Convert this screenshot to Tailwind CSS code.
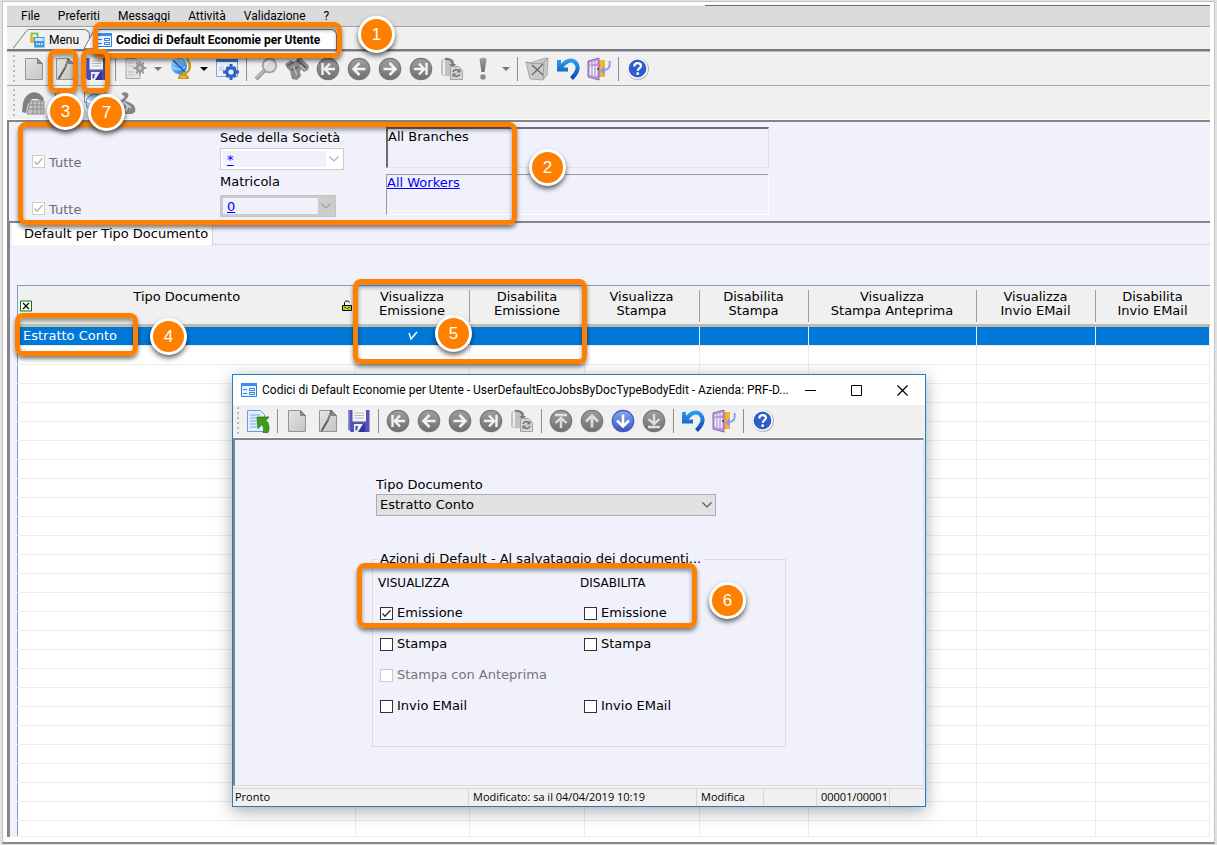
<!DOCTYPE html>
<html lang="it">
<head>
<meta charset="utf-8">
<title>Codici di Default Economie per Utente</title>
<script src="https://cdn.jsdelivr.net/npm/@tailwindcss/browser@4"></script>
</head>
<body class="bg-[#e2e2e2] font-['DejaVu_Sans',sans-serif] text-[13px] text-black">

<!-- icon sprite -->
<svg class="absolute size-0" aria-hidden="true">
  <defs>
    <linearGradient id="gPaper" x1="0" y1="0" x2="1" y2="1"><stop offset="0" stop-color="#e4e4e4"/><stop offset="1" stop-color="#c4c4c4"/></linearGradient>
    <linearGradient id="gGrey" x1="0" y1="0" x2="0" y2="1"><stop offset="0" stop-color="#a0a0a0"/><stop offset="1" stop-color="#6e6e6e"/></linearGradient>
    <linearGradient id="gBlue" x1="0" y1="0" x2="0" y2="1"><stop offset="0" stop-color="#84a9f0"/><stop offset="1" stop-color="#3a55c4"/></linearGradient>
    <linearGradient id="gSky" x1="0" y1="0" x2="1" y2="1"><stop offset="0" stop-color="#9be4ff"/><stop offset="1" stop-color="#1c6fe0"/></linearGradient>
    <linearGradient id="gUndo" x1="0" y1="0" x2="0" y2="1"><stop offset="0" stop-color="#2b9cf0"/><stop offset="1" stop-color="#0a49b4"/></linearGradient>
  </defs>
  <symbol id="i-new" viewBox="0 0 24 24"><path d="M3.500 1.500h12l5 5v16h-17z" fill="url(#gPaper)" stroke="#949494"/><path d="M15.500 1.500v5h5z" fill="#8c8c8c" stroke="#808080"/></symbol>
  <symbol id="i-edit" viewBox="0 0 24 24"><path d="M3.500 1.500h12l5 5v16h-17z" fill="url(#gPaper)" stroke="#949494"/><path d="M15.500 1.500v5h5z" fill="#8c8c8c" stroke="#808080"/><path d="M15.500 1.500L12 11 5.500 22" fill="none" stroke="#5c5c5c" stroke-width="1.900"/><path d="M14.800 3L11.500 11.500" stroke="#aaa" stroke-width=".7"/></symbol>
  <symbol id="i-save" viewBox="0 0 24 24"><path d="M1.500 1h21v22H4l-2.500-2.500z" fill="#5553b6"/><path d="M1.500 1H3v20.500l-1.500-1z" fill="#7d7bd0"/><path d="M5.500 1h13.500v11.500H5.500z" fill="#f4f4f4"/><path d="M7.500 4h9.500M7.500 6.500h9.500M7.500 9h9.500" stroke="#b9b9b9"/><path d="M7 15h11v8H7z" fill="#eeeef6"/><path d="M11 23l5-8h2v8z" fill="#3534a0"/><path d="M8.500 17h2.500l-1 4.500H8.500z" fill="#4a48a8"/></symbol>
  <symbol id="i-docgear" viewBox="0 0 24 24"><path d="M3 1.500h9l5 5v15H3z" fill="#e3e3e3" stroke="#a8a8a8"/><path d="M5 6h6M5 9h6M5 15h6M5 18h6" stroke="#bbb"/><g fill="#999"><circle cx="17" cy="11" r="4.500"/><path d="M16 4.500h2v13h-2zM10.500 10h13v2h-13zM12.500 6l1.500-1 7.500 11-1.500 1zM20 5l1.500 1L14 17l-1.500-1z"/></g><circle cx="17" cy="11" r="1.800" fill="#ccc"/></symbol>
  <symbol id="i-globe" viewBox="0 0 24 24"><path d="M18 2c4 5 4 11-1 14-3 2-5 2-7 1" fill="none" stroke="#c99a1c" stroke-width="2.500"/><circle cx="10" cy="9" r="8" fill="url(#gSky)"/><path d="M4 5c3-3 8-3 10 0M3 10c4 3 9 3 13 0" stroke="#c4f0ff" fill="none"/><path d="M4 3l12 12" stroke="#2c57b0" stroke-width="1.500"/><path d="M9 20l3-4h4l4 4v2H9z" fill="#c89b22"/><path d="M11 20h6" stroke="#f2d987"/></symbol>
  <symbol id="i-wingear" viewBox="0 0 24 24"><path d="M1.500 2.500h21v17h-21z" fill="#eef3fb" stroke="#8aa4cf"/><path d="M1 2h22v3H1z" fill="#3f78d2"/><path d="M4 9h5v5H4z" fill="#cfdcf3"/><g fill="#2e63c6"><circle cx="16" cy="15" r="6"/><path d="M14.500 7h3v16h-3zM8 13.500h16v3H8zM10.500 11l2-2 9 10-2 2zM19.500 9l2 2-9 10-2-2z"/></g><circle cx="16" cy="15" r="2.600" fill="#e9f0fd"/></symbol>
  <symbol id="i-find" viewBox="0 0 24 24"><path d="M2 22L11 13" stroke="#999" stroke-width="4"/><path d="M2 21l9-8" stroke="#c9c9c9" stroke-width="1.200"/><circle cx="15.500" cy="8.500" r="6.800" fill="#dedede" stroke="#a0a0a0" stroke-width="1.800"/><path d="M11.500 8c1-3 3-4 6-3" stroke="#fff" stroke-width="1.500" fill="none"/></symbol>
  <symbol id="i-bino" viewBox="0 0 24 24"><path d="M0 7l6-4 3 2 4-4h3l8 8-1 4-4 2-3-3-1 3 1 4-4 4-5-1-2-8-3-3z" fill="#8a8a8a"/><path d="M2 9l7-4M7 13l6-3M12 3l9 8" stroke="#5e5e5e" stroke-width="1.800"/><path d="M8 9l4 9M15 8l5 5" stroke="#bdbdbd" stroke-width="1.500"/></symbol>
  <symbol id="c-grey" viewBox="0 0 24 24"><circle cx="12" cy="12" r="10.700" fill="url(#gGrey)" stroke="#787878" stroke-width="1.200"/></symbol>
  <symbol id="i-first" viewBox="0 0 24 24"><use href="#c-grey"/><path d="M6.500 6v12M19 12H10M14 6.500L8.800 12l5.200 5.500" fill="none" stroke="#f2f2f2" stroke-width="2.400"/></symbol>
  <symbol id="i-prev" viewBox="0 0 24 24"><use href="#c-grey"/><path d="M18.500 12H7M12.500 6L6.500 12l6 6" fill="none" stroke="#f2f2f2" stroke-width="2.600"/></symbol>
  <symbol id="i-next" viewBox="0 0 24 24"><use href="#c-grey"/><path d="M5.500 12H17M11.500 6l6 6-6 6" fill="none" stroke="#f2f2f2" stroke-width="2.600"/></symbol>
  <symbol id="i-last" viewBox="0 0 24 24"><use href="#c-grey"/><path d="M17.500 6v12M5 12h9M10 6.500l5.200 5.500L10 17.500" fill="none" stroke="#f2f2f2" stroke-width="2.400"/></symbol>
  <symbol id="i-top" viewBox="0 0 24 24"><use href="#c-grey"/><path d="M6 6h12M12 19V10M6.500 14L12 8.800l5.500 5.200" fill="none" stroke="#dedede" stroke-width="2.400"/></symbol>
  <symbol id="i-up" viewBox="0 0 24 24"><use href="#c-grey"/><path d="M12 18.500V7M6 12.500l6-6 6 6" fill="none" stroke="#dedede" stroke-width="2.600"/></symbol>
  <symbol id="i-down" viewBox="0 0 24 24"><circle cx="12" cy="12" r="10.700" fill="url(#gBlue)" stroke="#4a55b8" stroke-width="1.200"/><path d="M12 5.500V17M6 11.500l6 6 6-6" fill="none" stroke="#fff" stroke-width="2.600"/></symbol>
  <symbol id="i-bottom" viewBox="0 0 24 24"><use href="#c-grey"/><path d="M6 18h12M12 5v9M6.500 10l5.500 5.200L17.500 10" fill="none" stroke="#dedede" stroke-width="2.400"/></symbol>
  <symbol id="i-refresh" viewBox="0 0 24 24"><path d="M1 4c0-3 13-3 13 0v13c0 3-13 3-13 0z" fill="#c2c2c2"/><path d="M4 3v15" stroke="#eee" stroke-width="2"/><path d="M5 2c5-1 8 2 8 6" fill="none" stroke="#7c7c7c" stroke-width="2.200"/><path d="M9 7h7l-3 4z" fill="#7c7c7c"/><path d="M10.500 9.500h8l4 4v9h-12z" fill="#d6d6d6" stroke="#a2a2a2"/><path d="M13 15c1-3 5-3 6-1M20 17c-1 3-5 3-6 1" fill="none" stroke="#777" stroke-width="1.600"/><path d="M20.500 11.500v4h-4zM12.500 20.500v-4h4z" fill="#777"/></symbol>
  <symbol id="i-bang" viewBox="0 0 24 24"><path d="M8.500 3c0-3 7-3 7 0L13.500 15h-3z" fill="url(#gGrey)"/><circle cx="12" cy="20" r="2.800" fill="#8b8b8b"/></symbol>
  <symbol id="i-mail" viewBox="0 0 24 24"><path d="M1 5l5 1 11-4 6-1-1 17-4 5-13-1z" fill="#cbcbcb" stroke="#a8a8a8"/><path d="M1 5c6 2 12 2 17 1l5-5M19 6l-1 16" fill="none" stroke="#9f9f9f"/><path d="M7 8l11 10M18 7L7 18" stroke="#6b6b6b" stroke-width="1.400"/></symbol>
  <symbol id="i-undo" viewBox="0 0 24 24"><path d="M3 3v9.500h9M4 11.500C9 4 15 1.500 19 5c5 5 2 11-3.500 16.500" fill="none" stroke="url(#gUndo)" stroke-width="4"/></symbol>
  <symbol id="i-door" viewBox="0 0 24 24"><path d="M11 3h7v17h-7z" fill="#f3b52c"/><path d="M1 4l11-3v22L1 20z" fill="#b99bd8" stroke="#8c68b6"/><path d="M3.500 5.500v2M6.500 4.500v2.500M9.500 4v2.500M3.500 9v9M6.500 9v10M9.500 9v10" stroke="#f6effc" stroke-width="1.600"/><circle cx="11" cy="12" r="1" fill="#5b2f6f"/><path d="M22.500 4c1 6-1 9-6 9.500" fill="none" stroke="#8f9be4" stroke-width="2"/><path d="M18 9v9l-5-4.500z" fill="#8f9be4"/></symbol>
  <symbol id="i-help" viewBox="0 0 24 24"><circle cx="12" cy="12" r="11" fill="#b4b4b4"/><circle cx="11.500" cy="11.500" r="10.500" fill="#fff"/><circle cx="11.500" cy="11.500" r="8.900" fill="#2f5ecb"/><path d="M8.300 9.500c0-4.500 6.700-4.300 6.700-.7 0 2.200-3.200 2.400-3.200 5" fill="none" stroke="#fff" stroke-width="2.200"/><circle cx="11.700" cy="16.700" r="1.400" fill="#fff"/></symbol>
  <symbol id="i-export" viewBox="0 0 24 24"><path d="M1.500 1.500h13l4 4v17h-17z" fill="#e2eeff" stroke="#6f9ad6"/><path d="M4 6h10M4 9h10M4 12h7M4 15h7M4 18h7" stroke="#7fa8e2"/><path d="M11 8h12l-3 3.500c3 3 4 7 2 12h-5c1-3 1-5-1-8l-4 4z" fill="#3f9a1d" stroke="#2c7411" stroke-width=".8"/></symbol>
  <symbol id="i-form" viewBox="0 0 16 14"><path d="M.500.500h15v13H.500z" fill="#e8f3ff" stroke="#2f7fe0"/><path d="M0 0h16v3H0z" fill="#3d8df0"/><path d="M2 6.500h4M2 10.500h4" stroke="#2f7fe0"/><path d="M8.500 5.500h5v2h-5zM8.500 9.500h5v2h-5z" fill="#fff" stroke="#2f7fe0"/></symbol>
  <symbol id="i-menu" viewBox="0 0 16 16"><path d="M2.500 1.500h6v5h-6z" fill="none" stroke="#8cc152" stroke-width="2"/><path d="M1 5h5v6H1z" fill="#e9b53c"/><path d="M5 5h10.500v10.500H5z" fill="#3d9be0"/><path d="M6 6h8.500v3H6z" fill="#cfe8fb"/><path d="M7 12h1.500M9.500 12H11M12 12h1.500" stroke="#fff" stroke-width="1.500"/></symbol>
  <symbol id="i-phone" viewBox="0 0 24 24"><path d="M2 12C4 2 14-2 20 4l3 4-2 3-4-3-6 0-4 5-2 9-4-1z" fill="#808080"/><path d="M9 10h14v13H6z" fill="#c4c4c4" stroke="#8b8b8b"/><path d="M8 14h15M7 18h16M12 10v13M16 10v13M20 10v13" stroke="#8b8b8b"/></symbol>
  <symbol id="i-world" viewBox="0 0 24 24"><path d="M1.500 1.500h21v10h-21z" fill="#f4f4f4" stroke="#888"/><circle cx="12" cy="12" r="9" fill="#a7d0ee" stroke="#4686b8"/><path d="M4 9l8 5 8-6" fill="none" stroke="#fff" stroke-width="2"/></symbol>
  <symbol id="i-user" viewBox="0 0 24 24"><path d="M8 2c4-2 8 1 6 4l-3 4c3 1 5 1 7 3 3 1 4 6 3 8l-3 2H3l2-5 5-3-2-3-4-1 6-4c1-1 0-3-2-3z" fill="#868686"/><path d="M9 11l8 6M12 20l2-6" stroke="#cfcfcf" stroke-width="1.800"/></symbol>
  <symbol id="i-chev" viewBox="0 0 10 6"><path d="M.500.500L5 5 9.500.500" fill="none" stroke="currentColor" stroke-width="1.200"/></symbol>
  <symbol id="i-tick" viewBox="0 0 13 13"><path d="M2.500 6.500L5 9.200l5.500-6" fill="none" stroke="currentColor" stroke-width="1.400"/></symbol>
  <symbol id="i-drop" viewBox="0 0 8 4"><path d="M0 0h8L4 4z" fill="currentColor"/></symbol>
</svg>

<div class="relative pt-px px-0.5 pb-0.5">
<div class="border border-[#c4c4c4] border-b-2 border-b-[#8c8c8c] bg-white pt-[3px] pl-1 pr-1 pb-[5px]">
<div class="bg-[#f0f0f0]">
  <div class="ml-[58%] h-px bg-[#6e6e6e]"></div>

  <!-- menu bar -->
  <nav class="flex h-[21px] items-center gap-[18px] border-b border-[#a0a0a0] bg-[#dbdbdb] pl-3.5 font-[Roboto,sans-serif] text-xs">
    <button>File</button><button>Preferiti</button><button>Messaggi</button><button>Attività</button><button>Validazione</button><button>?</button>
  </nav>

  <!-- document tabs -->
  <div class="flex h-6 items-end border-b-2 border-[#76767c] pl-1.5 font-[Roboto,sans-serif] text-xs">
    <svg class="h-5 w-4" viewBox="0 0 16 20" fill="none" stroke="#777"><path d="M0 19.500L13 2.500Q14.500 .500 16 .500"/></svg>
    <button class="flex h-5 w-[61px] items-center gap-1 rounded-tr-md border-t border-r border-[#777]"><svg class="size-4 shrink-0"><use href="#i-menu"/></svg>Menu</button>
    <svg class="-ml-1.5 h-5 w-3" viewBox="0 0 12 20" stroke="#777"><path d="M0 19.500L9.500 2.500Q10.500 .500 12 .500V20z" fill="#fff"/></svg>
    <button class="flex h-5 items-center gap-1 rounded-tr-md border-t border-r border-[#777] bg-white pr-4 font-bold whitespace-nowrap"><svg class="h-3.5 w-4 shrink-0"><use href="#i-form"/></svg>Codici di Default Economie per Utente</button>
  </div>

  <!-- main toolbar -->
  <div class="flex h-[35px] items-center border-t border-b border-t-[#b8b8c4] border-b-[#a8a8a8] pl-1.5">
    <span class="mr-[3px] h-7 w-0.5 bg-[repeating-linear-gradient(#bbb_0_2px,transparent_2px_5px)]"></span>
    <button aria-label="Nuovo" class="flex w-[31px] justify-center"><svg class="size-6"><use href="#i-new"/></svg></button>
    <button aria-label="Modifica" class="flex w-[31px] justify-center"><svg class="size-6"><use href="#i-edit"/></svg></button>
    <button aria-label="Salva" class="flex w-[31px] justify-center"><svg class="size-6"><use href="#i-save"/></svg></button>
    <span class="flex h-6 w-2 justify-center"><i class="w-px bg-[#8c8c8c]"></i></span>
    <button aria-label="Opzioni" class="flex w-[31px] justify-center"><svg class="size-6"><use href="#i-docgear"/></svg></button>
    <button aria-label="Altre opzioni" class="flex w-[15px] justify-center text-[#777]"><svg class="h-1 w-2"><use href="#i-drop"/></svg></button>
    <button aria-label="Web" class="flex w-[31px] justify-center"><svg class="size-6"><use href="#i-globe"/></svg></button>
    <button aria-label="Altro web" class="flex w-[15px] justify-center text-black"><svg class="h-1 w-2"><use href="#i-drop"/></svg></button>
    <button aria-label="Configura" class="flex w-[31px] justify-center"><svg class="size-6"><use href="#i-wingear"/></svg></button>
    <span class="flex h-6 w-2 justify-center"><i class="w-px bg-[#8c8c8c]"></i></span>
    <button aria-label="Cerca" class="flex w-[31px] justify-center"><svg class="size-6"><use href="#i-find"/></svg></button>
    <button aria-label="Trova" class="flex w-[31px] justify-center"><svg class="size-6"><use href="#i-bino"/></svg></button>
    <button aria-label="Primo" class="flex w-[31px] justify-center"><svg class="size-6"><use href="#i-first"/></svg></button>
    <button aria-label="Precedente" class="flex w-[31px] justify-center"><svg class="size-6"><use href="#i-prev"/></svg></button>
    <button aria-label="Successivo" class="flex w-[31px] justify-center"><svg class="size-6"><use href="#i-next"/></svg></button>
    <button aria-label="Ultimo" class="flex w-[31px] justify-center"><svg class="size-6"><use href="#i-last"/></svg></button>
    <button aria-label="Aggiorna" class="flex w-[31px] justify-center"><svg class="size-6"><use href="#i-refresh"/></svg></button>
    <button aria-label="Esegui" class="flex w-[31px] justify-center"><svg class="size-6"><use href="#i-bang"/></svg></button>
    <button aria-label="Altre azioni" class="flex w-[15px] justify-center text-[#777]"><svg class="h-1 w-2"><use href="#i-drop"/></svg></button>
    <span class="flex h-6 w-2 justify-center"><i class="w-px bg-[#8c8c8c]"></i></span>
    <button aria-label="Elimina" class="flex w-[31px] justify-center"><svg class="size-6"><use href="#i-mail"/></svg></button>
    <button aria-label="Annulla" class="flex w-[31px] justify-center"><svg class="size-6"><use href="#i-undo"/></svg></button>
    <button aria-label="Esci" class="flex w-[31px] justify-center"><svg class="size-6"><use href="#i-door"/></svg></button>
    <span class="flex h-6 w-2 justify-center"><i class="w-px bg-[#8c8c8c]"></i></span>
    <button aria-label="Aiuto" class="flex w-[31px] justify-center"><svg class="size-6"><use href="#i-help"/></svg></button>
  </div>

  <!-- secondary toolbar -->
  <div class="flex h-[34px] items-center border-b border-white pl-1.5">
    <span class="mr-0.5 h-7 w-0.5 bg-[repeating-linear-gradient(#bbb_0_2px,transparent_2px_5px)]"></span>
    <button aria-label="Telefono" class="flex w-[31px] justify-center"><svg class="size-6"><use href="#i-phone"/></svg></button>
    <button aria-label="Documento" class="flex w-[31px] justify-center"><svg class="size-6"><use href="#i-new"/></svg></button>
    <button aria-label="Mappa" class="flex w-[31px] justify-center"><svg class="size-6"><use href="#i-world"/></svg></button>
    <button aria-label="Utente" class="flex w-[31px] justify-center"><svg class="size-6"><use href="#i-user"/></svg></button>
  </div>

  <!-- header form -->
  <section class="border-t-2 border-b-2 border-l-2 border-[#858585] bg-[#f1f1fb] pt-[5px] pb-1 pl-[23px]">
    <div class="flex">
      <label class="flex h-[47px] w-[188px] items-end gap-1 pb-0.5 text-[#6d6d6d]"><span class="grid pb-1"><input type="checkbox" checked disabled class="peer col-start-1 row-start-1 size-[13px] appearance-none border border-[#ccc] bg-white"><svg class="col-start-1 row-start-1 hidden size-[13px] text-[#b5b5b5] peer-checked:block"><use href="#i-tick"/></svg></span>Tutte</label>
      <div class="w-[166px]">
        <label for="sede" class="flex h-[21px] items-center">Sede della Società</label>
        <div class="flex h-[22px] w-[124px] items-center border border-[#ccc] bg-white p-0.5"><input id="sede" value="*" class="h-full w-[103px] bg-[#f1f1fb] pl-1 text-[#00f] underline"><button aria-label="Apri sede" class="flex flex-1 justify-center text-[#b0b0b0]"><svg class="h-1.5 w-2.5"><use href="#i-chev"/></svg></button></div>
      </div>
      <output class="h-[41px] w-[383px] border border-[#e3e3e3] border-t-2 border-l-2 border-t-[#6c6c6c] border-l-[#6c6c6c] leading-4">All Branches</output>
    </div>
    <div class="flex">
      <label class="-mb-0.5 flex h-[43px] w-[188px] items-end gap-1 text-[#6d6d6d]"><span class="grid pb-0.5"><input type="checkbox" checked disabled class="peer col-start-1 row-start-1 size-[13px] appearance-none border border-[#ccc] bg-white"><svg class="col-start-1 row-start-1 hidden size-[13px] text-[#b5b5b5] peer-checked:block"><use href="#i-tick"/></svg></span><span class="leading-3.5">Tutte</span></label>
      <div class="w-[166px]">
        <label for="matr" class="flex h-[21px] items-start leading-4">Matricola</label>
        <div class="flex h-[22px] w-[116px] items-center border border-[#c4c4c4] bg-[#ccc] p-0.5"><input id="matr" value="0" class="h-full w-[95px] bg-[#f1f1fb] pl-1 text-[#00f] underline"><button aria-label="Apri matricola" class="flex flex-1 justify-center text-[#a0a0a0]"><svg class="h-1.5 w-2.5"><use href="#i-chev"/></svg></button></div>
      </div>
      <div class="h-[41px] w-[383px] border border-white border-t-[#999] border-l-[#999] leading-4"><a href="#" class="text-[#00f] underline">All Workers</a></div>
    </div>
  </section>

  <!-- detail tab -->
  <section class="border-l-[3px] border-[#858585] bg-[#f1f1fb]">
    <div class="flex h-[22px] pl-0.5">
      <button class="bg-white pr-1 pl-3">Default per Tipo Documento</button>
      <div class="flex-1 border-b border-l border-[#d4d4d8]"></div>
    </div>
    <div class="pt-10 pl-[7px]">
      <table class="w-full table-fixed border-collapse border-t border-l border-[#7f9db9] bg-white">
        <colgroup><col class="w-[338px]"><col class="w-[114px]"><col class="w-[115px]"><col class="w-[115px]"><col class="w-[109px]"><col class="w-[168px]"><col class="w-[119px]"><col></colgroup>
        <thead>
          <tr class="h-10 border-b-3 border-[#c0bcae] bg-[#f0f0f0] align-top leading-3.5">
            <th class="p-0 pt-1 font-normal"><div>Tipo Documento</div><div class="-mt-1 flex items-center justify-between pr-1 pl-0.5"><svg class="h-3 w-3" viewBox="0 0 12 12"><path d="M.500 1h11v10H.500z" fill="#fff" stroke="#087a08"/><path d="M3 3l6 6M9 3L3 9" stroke="#000" stroke-width="1.300"/></svg><svg class="h-3 w-2.5" viewBox="0 0 10 12"><path d="M2.500 6V2.500C3 .500 7 .500 7.500 2.500" fill="none" stroke="#000"/><path d="M.500 5.500h9v5h-9z" fill="#b9d424" stroke="#000"/><path d="M3 7v1M5 8v1M7 7v1" stroke="#000"/></svg></div></th>
            <th class="p-0 font-normal"><div class="mt-1 h-8 border-r border-[#a0a0a0]">Visualizza<br>Emissione</div></th>
            <th class="p-0 font-normal"><div class="mt-1 h-8">Disabilita<br>Emissione</div></th>
            <th class="p-0 font-normal"><div class="mt-1 h-8 border-r border-[#a0a0a0]">Visualizza<br>Stampa</div></th>
            <th class="p-0 font-normal"><div class="mt-1 h-8 border-r border-[#a0a0a0]">Disabilita<br>Stampa</div></th>
            <th class="p-0 font-normal"><div class="mt-1 h-8 border-r border-[#a0a0a0]">Visualizza<br>Stampa Anteprima</div></th>
            <th class="p-0 font-normal"><div class="mt-1 h-8 border-r border-[#a0a0a0]">Visualizza<br>Invio EMail</div></th>
            <th class="p-0 font-normal"><div class="mt-1">Disabilita<br>Invio EMail</div></th>
          </tr>
        </thead>
        <tbody id="rows" class="[&_td]:border-r [&_td]:border-b [&_td]:border-[#ececec] [&_td]:p-0">
          <tr class="h-[19px] bg-[#0078d7] leading-[18px] text-white"><td class="pl-[5px]!">Estratto Conto</td><td><svg class="mx-auto size-3" viewBox="0 0 12 12"><path d="M2 3l2 6 6-7" fill="none" stroke="#fff" stroke-width="1.500"/></svg></td><td></td><td></td><td></td><td></td><td></td><td></td></tr>
        </tbody>
      </table>
    </div>
  </section>
</div>
</div>

<!-- edit dialog -->
<div role="dialog" aria-label="Codici di Default Economie per Utente" class="absolute top-[374px] left-[232px] w-[694px] border border-[#1a7fd0] bg-[#f0f0f0] shadow-[0_4px_16px_rgba(0,0,0,0.35)]">
  <div class="flex h-[30px] items-center bg-white pl-2 font-[Roboto,sans-serif] text-xs">
    <svg class="h-3.5 w-4 shrink-0"><use href="#i-form"/></svg>
    <h1 class="ml-[5px] min-w-0 flex-1 whitespace-nowrap">Codici di Default Economie per Utente - UserDefaultEcoJobsByDocTypeBodyEdit - Azienda: PRF-D...</h1>
    <button aria-label="Riduci" class="flex w-[46px] shrink-0 justify-center"><svg class="size-[11px]" viewBox="0 0 11 11"><path d="M0 5.500h11" stroke="#000"/></svg></button>
    <button aria-label="Ingrandisci" class="flex w-[46px] shrink-0 justify-center"><svg class="size-[11px]" viewBox="0 0 11 11"><path d="M.500.500h10v10H.500z" fill="none" stroke="#000"/></svg></button>
    <button aria-label="Chiudi" class="flex w-[46px] shrink-0 justify-center"><svg class="size-[11px]" viewBox="0 0 11 11"><path d="M.500.500l10 10M10.500.500l-10 10" stroke="#000" stroke-width="1.200"/></svg></button>
  </div>
  <div class="flex h-[33px] items-center border-b border-white pl-1">
    <span class="mr-[3px] h-7 w-0.5 bg-[repeating-linear-gradient(#bbb_0_2px,transparent_2px_5px)]"></span>
    <button aria-label="Esporta" class="flex w-[31px] justify-center"><svg class="size-6"><use href="#i-export"/></svg></button>
    <span class="flex h-6 w-2 justify-center"><i class="w-px bg-[#8c8c8c]"></i></span>
    <button aria-label="Nuovo" class="flex w-[31px] justify-center"><svg class="size-6"><use href="#i-new"/></svg></button>
    <button aria-label="Modifica" class="flex w-[31px] justify-center"><svg class="size-6"><use href="#i-edit"/></svg></button>
    <button aria-label="Salva" class="flex w-[31px] justify-center"><svg class="size-6"><use href="#i-save"/></svg></button>
    <span class="flex h-6 w-2 justify-center"><i class="w-px bg-[#8c8c8c]"></i></span>
    <button aria-label="Primo" class="flex w-[31px] justify-center"><svg class="size-6"><use href="#i-first"/></svg></button>
    <button aria-label="Precedente" class="flex w-[31px] justify-center"><svg class="size-6"><use href="#i-prev"/></svg></button>
    <button aria-label="Successivo" class="flex w-[31px] justify-center"><svg class="size-6"><use href="#i-next"/></svg></button>
    <button aria-label="Ultimo" class="flex w-[31px] justify-center"><svg class="size-6"><use href="#i-last"/></svg></button>
    <button aria-label="Aggiorna" class="flex w-[31px] justify-center"><svg class="size-6"><use href="#i-refresh"/></svg></button>
    <span class="flex h-6 w-2 justify-center"><i class="w-px bg-[#8c8c8c]"></i></span>
    <button aria-label="Prima riga" class="flex w-[31px] justify-center"><svg class="size-6"><use href="#i-top"/></svg></button>
    <button aria-label="Riga su" class="flex w-[31px] justify-center"><svg class="size-6"><use href="#i-up"/></svg></button>
    <button aria-label="Riga giù" class="flex w-[31px] justify-center"><svg class="size-6"><use href="#i-down"/></svg></button>
    <button aria-label="Ultima riga" class="flex w-[31px] justify-center"><svg class="size-6"><use href="#i-bottom"/></svg></button>
    <span class="flex h-6 w-2 justify-center"><i class="w-px bg-[#8c8c8c]"></i></span>
    <button aria-label="Annulla" class="flex w-[31px] justify-center"><svg class="size-6"><use href="#i-undo"/></svg></button>
    <button aria-label="Esci" class="flex w-[31px] justify-center"><svg class="size-6"><use href="#i-door"/></svg></button>
    <span class="flex h-6 w-2 justify-center"><i class="w-px bg-[#8c8c8c]"></i></span>
    <button aria-label="Aiuto" class="flex w-[31px] justify-center"><svg class="size-6"><use href="#i-help"/></svg></button>
  </div>
  <div class="mr-px border-t-2 border-r border-b border-l-2 border-[#ddd] border-t-[#858585] border-l-[#858585] bg-[#f1f1fb] pt-9 pr-[137px] pb-[38px] pl-[137px]">
    <label for="tipo" class="ml-1 block leading-[18px]">Tipo Documento</label>
    <div class="ml-1 grid w-[340px] items-center">
      <select id="tipo" class="col-start-1 row-start-1 h-[22px] appearance-none border border-[#adadad] bg-[#e1e1e1] pl-[3px]"><option>Estratto Conto</option></select>
      <svg class="pointer-events-none col-start-1 row-start-1 mr-1 h-1.5 w-2.5 justify-self-end text-[#555]"><use href="#i-chev"/></svg>
    </div>
    <fieldset class="mt-[34px] border border-[#dcdcdc] pb-[31px] pl-[5px]">
      <legend class="px-0.5 leading-[18px] whitespace-nowrap">Azioni di Default - Al salvataggio dei documenti...</legend>
      <div class="grid grid-cols-[202px_1fr] pt-1 text-xs leading-[22px]"><span>VISUALIZZA</span><span>DISABILITA</span></div>
      <div class="grid grid-cols-[204px_1fr] gap-y-[13px] pt-2.5 pl-0.5 leading-[18px]">
        <label class="flex items-center gap-1"><span class="grid"><input type="checkbox" checked class="peer col-start-1 row-start-1 size-[13px] appearance-none border border-[#333] bg-white"><svg class="pointer-events-none col-start-1 row-start-1 hidden size-[13px] text-[#333] peer-checked:block"><use href="#i-tick"/></svg></span>Emissione</label>
        <label class="flex items-center gap-1"><input type="checkbox" class="size-[13px] appearance-none border border-[#333] bg-white">Emissione</label>
        <label class="flex items-center gap-1"><input type="checkbox" class="size-[13px] appearance-none border border-[#333] bg-white">Stampa</label>
        <label class="flex items-center gap-1"><input type="checkbox" class="size-[13px] appearance-none border border-[#333] bg-white">Stampa</label>
        <label class="col-span-2 flex items-center gap-1 text-[#767676]"><input type="checkbox" disabled class="size-[13px] appearance-none border border-[#ccc] bg-white">Stampa con Anteprima</label>
        <label class="flex items-center gap-1"><input type="checkbox" class="size-[13px] appearance-none border border-[#333] bg-white">Invio EMail</label>
        <label class="flex items-center gap-1"><input type="checkbox" class="size-[13px] appearance-none border border-[#333] bg-white">Invio EMail</label>
      </div>
    </fieldset>
  </div>
  <footer class="mt-0.5 flex h-[18px] items-center border-t border-[#d8d8d8] font-['Open_Sans',sans-serif] text-[11px] whitespace-nowrap">
    <span class="flex-1 pl-0.5">Pronto</span>
    <span class="w-[228px] border-l border-[#d8d8d8] pl-1">Modificato: sa il 04/04/2019 10:19</span>
    <span class="w-[67px] border-l border-[#d8d8d8] pl-1">Modifica</span>
    <span class="h-4 w-[53px] border-l border-[#d8d8d8]"></span>
    <span class="w-[73px] border-l border-[#d8d8d8] pl-1">00001/00001</span>
    <span class="h-4 w-9 border-l border-[#d8d8d8]"></span>
  </footer>
</div>

<!-- callouts -->
<div class="pointer-events-none font-['Liberation_Sans',sans-serif] text-[17px] text-white [&>b]:absolute [&>b]:rounded-lg [&>b]:border-5 [&>b]:border-[#ff8000] [&>b]:shadow-[0_3px_4px_rgba(0,0,0,0.5),inset_0_3px_4px_rgba(0,0,0,0.4)] [&>span]:absolute [&>span]:flex [&>span]:size-[37px] [&>span]:items-center [&>span]:justify-center [&>span]:rounded-full [&>span]:border-3 [&>span]:border-white [&>span]:bg-[#ff8000] [&>span]:shadow-[0_3px_5px_rgba(0,0,0,0.6)]">
  <b class="top-[22px] left-[93px] h-9 w-[249px]"></b>
  <b class="top-[49px] left-12 h-11 w-[30px]"></b>
  <b class="top-[49px] left-[81px] h-11 w-[29px]"></b>
  <b class="top-[122px] left-[18px] h-[103px] w-[499px]"></b>
  <b class="top-[313px] left-[15px] h-[43px] w-[123px]"></b>
  <b class="top-[279px] left-[353px] h-[85px] w-[234px]"></b>
  <b class="top-[563px] left-[357px] h-[65px] w-[340px]"></b>
  <span class="top-4 left-[358px]">1</span>
  <span class="top-[149px] left-[529px]">2</span>
  <span class="top-[93px] left-[47px]">3</span>
  <span class="top-[318px] left-[150px]">4</span>
  <span class="top-[315px] left-[435px]">5</span>
  <span class="top-[582px] left-[709px]">6</span>
  <span class="top-[94px] left-[88px]">7</span>
</div>
</div>

<script>
  // Empty grid rows that fill the list below the last record
  const body = document.getElementById('rows');
  for (let i = 0; i < 26; i++) {
    const tr = document.createElement('tr');
    tr.className = i < 25 ? 'h-[19px]' : 'h-4';
    tr.innerHTML = '<td></td>'.repeat(8);
    body.append(tr);
  }
</script>
</body>
</html>
